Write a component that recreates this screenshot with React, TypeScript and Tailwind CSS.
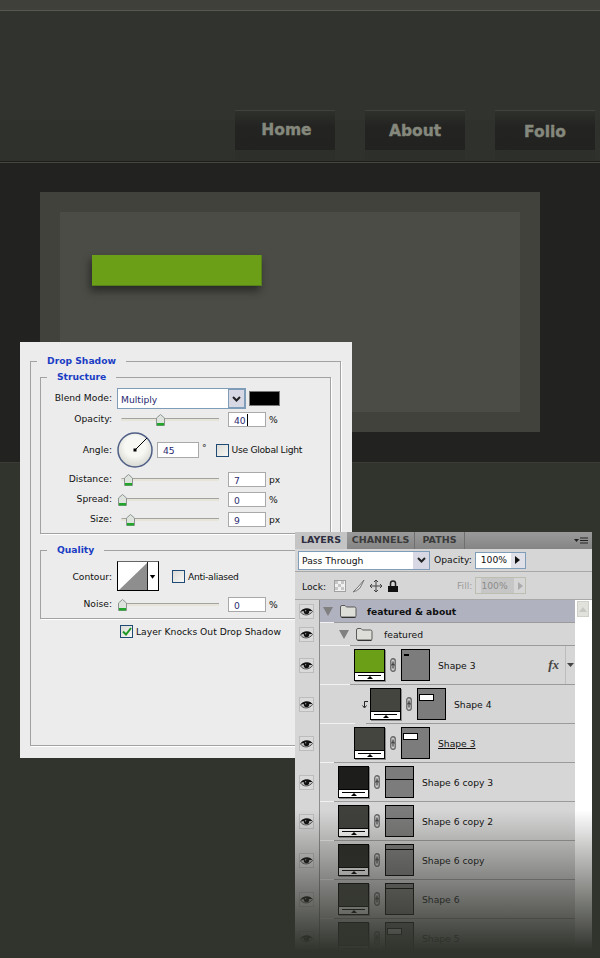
const dialogText = "font-['DejaVu_Sans',sans-serif] text-[9.2px] text-[#111]";

const Thumb = () => (
  <svg width="9" height="12" viewBox="0 0 9 12" className="absolute top-[-5px] -ml-1">
    <path d="M4.5 .5 L8.5 4 V11.5 H.5 V4 Z" fill="#dfe3de" stroke="#8d9490" />
    <rect x="1" y="9" width="7" height="2.5" fill="#22a52b" />
  </svg>
);

const Slider = ({ at }: { at: number }) => (
  <div className="relative ml-[9px] h-[3px] w-[98px] rounded-l-full border-t border-[#a3a3a0] bg-[#e7e5da]">
    <div className="absolute" style={{ left: at }}>
      <Thumb />
    </div>
  </div>
);

const Field = ({ value, caret, className = "ml-[9px] w-[38px]" }: { value: string; caret?: boolean; className?: string }) => (
  <div className={`flex h-[15px] items-center border border-[#a9a9a9] bg-white pl-[5px] text-[#2a2a70] ${className}`}>
    <span className="pt-[2px]">{value}</span>
    {caret && <span className="ml-px h-[12px] w-px bg-black" />}
  </div>
);

const Check = ({ checked }: { checked?: boolean }) => (
  <div className="flex size-[13px] items-center justify-center border border-[#1f4a73] bg-linear-to-br from-[#dcdcd8] to-[#f6f6f4]">
    {checked && (
      <svg width="10" height="9" viewBox="0 0 10 9">
        <path d="M1 4.5 L4 7.5 L9 1" fill="none" stroke="#1d9a24" strokeWidth="2" />
      </svg>
    )}
  </div>
);

const SliderRow = ({ label, at, value, unit, caret, mt }: { label: string; at: number; value: string; unit: string; caret?: boolean; mt: string }) => (
  <div className={`flex h-[15px] items-center ${mt}`}>
    <span className="w-[71px] pb-[2px] text-right">{label}</span>
    <Slider at={at} />
    <Field value={value} caret={caret} />
    <span className="ml-[3px]">{unit}</span>
  </div>
);

const DropShadowDialog = () => (
  <div className={`absolute top-[342px] left-[20px] h-[416px] w-[332px] bg-[#ececec] px-[10px] pt-[12px] ${dialogText}`}>
    <fieldset className="h-[392px] w-[311px] border border-[#a2a2a2] px-[9px] shadow-[1px_1px_0_#fff]">
      <legend className="-ml-[3px] h-[14px] px-[10px] leading-[14px] font-bold text-[#1b3ec4]">Drop Shadow</legend>
      <fieldset className="mt-[2px] w-[291px] border border-[#a2a2a2] px-0 pt-[4px] pb-[6px] shadow-[1px_1px_0_#fff]">
        <legend className="ml-[6px] h-[14px] px-[10px] leading-[14px] font-bold text-[#1b3ec4]">Structure</legend>
        <div className="flex h-[21px] items-center">
          <span className="w-[71px] pb-[2px] text-right">Blend Mode:</span>
          <div className="ml-[5px] flex h-[21px] w-[129px] items-center justify-between border border-[#7f9db9] bg-white pl-[3px] text-[#2a2a70]">
            <span className="pt-[2px]">Multiply</span>
            <div className="flex h-full w-[17px] items-center justify-center border border-[#7f9db9] bg-[#d7d8e4]">
              <svg width="9" height="6" viewBox="0 0 9 6">
                <path d="M1 1 L4.5 4.5 L8 1" fill="none" stroke="#222" strokeWidth="2" />
              </svg>
            </div>
          </div>
          <div className="ml-[3px] h-[15px] w-[31px] border border-[#777] bg-black" />
        </div>
        <SliderRow label="Opacity:" at={39} value="40" unit="%" caret mt="mt-[3px]" />
        <div className="mt-[5px] flex h-[36px] items-center">
          <span className="w-[71px] text-right">Angle:</span>
          <svg width="36" height="36" viewBox="0 0 36 36" className="ml-[5px]">
            <defs>
              <radialGradient id="dial" cx="0.5" cy="0.4" r="0.6">
                <stop offset="0.5" stopColor="#f7f7f3" />
                <stop offset="1" stopColor="#d8d8d2" />
              </radialGradient>
            </defs>
            <circle cx="18" cy="18" r="17" fill="url(#dial)" stroke="#4f5f86" strokeWidth="1.5" />
            <line x1="18" y1="18" x2="30" y2="6" stroke="#000" />
            <rect x="16.5" y="16.5" width="3" height="3" fill="#000" />
          </svg>
          <Field value="45" className="ml-[4px] h-[16px] w-[42px]" />
          <span className="mb-[4px] ml-[3px]">°</span>
          <div className="ml-[9px]"><Check /></div>
          <span className="ml-[3px] tracking-[-0.3px]">Use Global Light</span>
        </div>
        <SliderRow label="Distance:" at={7} value="7" unit="px" mt="mt-[4px]" />
        <SliderRow label="Spread:" at={1} value="0" unit="%" mt="mt-[5px]" />
        <SliderRow label="Size:" at={9} value="9" unit="px" mt="mt-[5px]" />
      </fieldset>
      <fieldset className="mt-[9px] w-[291px] border border-[#a2a2a2] px-0 pt-[4px] pb-[6px] shadow-[1px_1px_0_#fff]">
        <legend className="ml-[6px] h-[14px] px-[10px] leading-[14px] font-bold text-[#1b3ec4]">Quality</legend>
        <div className="flex h-[30px] items-center">
          <span className="w-[71px] pt-[2px] text-right">Contour:</span>
          <div className="ml-[5px] flex h-[30px] w-[42px] border border-black border-t-[#666] bg-white">
            <svg width="29" height="28" viewBox="0 0 29 28">
              <path d="M1 28 L29 1 V28 Z" fill="#8e8e8e" />
            </svg>
            <svg width="11" height="28" viewBox="0 0 11 28" className="border-l border-[#222]">
              <path d="M2 13 H8 L5 17 Z" fill="#000" />
            </svg>
          </div>
          <div className="ml-[13px]"><Check /></div>
          <span className="ml-[3px] pt-[2px] tracking-[-0.3px]">Anti-aliased</span>
        </div>
        <SliderRow label="Noise:" at={1} value="0" unit="%" mt="mt-[6px]" />
      </fieldset>
      <div className="mt-[6px] ml-[80px] flex items-center">
        <Check checked />
        <span className="ml-[3px]">Layer Knocks Out Drop Shadow</span>
      </div>
    </fieldset>
  </div>
);

const Eye = () => (
  <div className="flex size-[15px] items-center justify-center border border-[#bcbcbc] bg-[#dadada]">
    <svg width="13" height="10" viewBox="0 0 13 10">
      <path d="M.5 5 C3 1 9.5 .4 12.5 4.5 C9.5 9 3 9 .5 5 Z" fill="#c4c4c4" stroke="#555" />
      <path d="M.5 4.5 C3 .8 9.5 .4 12.5 4 L9 4 L4 4 Z" fill="#111" />
      <circle cx="6.5" cy="4.6" r="2.7" fill="#111" />
      <circle cx="5.6" cy="3.8" r=".7" fill="#999" />
    </svg>
  </div>
);

const Folder = () => (
  <svg width="17" height="13" viewBox="0 0 17 13" className="shrink-0">
    <path d="M.5 11 V2 Q.5 .5 2 .5 H5 L6.5 2 H14.5 Q16 2 16 3.5 V11 Q16 12 14.5 12 H2 Q.5 12 .5 11 Z" fill="#deded8" stroke="#5a5a5a" />
    <path d="M1.5 12.5 H15.5" stroke="#333" />
  </svg>
);

const Triangle = () => (
  <svg width="10" height="9" viewBox="0 0 10 9" className="shrink-0">
    <path d="M0 0 H10 L5 9 Z" fill="#808080" />
  </svg>
);

const Chain = () => (
  <svg width="6" height="14" viewBox="0 0 6 14" className="shrink-0">
    <rect x=".75" y=".75" width="4.5" height="7" rx="2.2" fill="#cfcfcf" stroke="#666" strokeWidth="1.3" />
    <rect x=".75" y="6.25" width="4.5" height="7" rx="2.2" fill="#cfcfcf" stroke="#666" strokeWidth="1.3" />
    <line x1="3" y1="3.5" x2="3" y2="10.5" stroke="#222" />
  </svg>
);

const MaskShape = ({ kind }: { kind: string }) => (
  <div className="relative h-[32px] w-[29px] shrink-0 border border-black bg-[#7c7c7c]">
    {kind === "dash" && <div className="absolute top-[4px] left-[2px] h-px w-[5px] border-t-2 border-black" />}
    {kind === "box" && <div className="absolute top-[5px] left-[1px] h-[7px] w-[15px] border border-black bg-white" />}
    {kind === "line" && <div className="absolute top-[12px] left-0 h-px w-full bg-black" />}
    {kind === "lineTop" && <div className="absolute top-[4px] left-0 h-px w-full bg-black" />}
  </div>
);

const ColorThumb = ({ color }: { color: string }) => (
  <div className="flex h-[32px] w-[31px] shrink-0 flex-col border border-black bg-white shadow-[1px_1px_0_#8a8a8a]">
    <div className="h-[22px]" style={{ background: color }} />
    <div className="flex flex-1 flex-col items-center border-t border-black pt-[2px]">
      <div className="h-px w-[23px] bg-black" />
      <svg width="6" height="3" viewBox="0 0 6 3"><path d="M0 3 H6 L3 0 Z" fill="#000" /></svg>
    </div>
  </div>
);

// white part of the row rule, then the grey part starting further right
const Divider = ({ white, gap = "" }: { white: string; gap?: string }) => (
  <div className="flex h-px shrink-0">
    <div className={`bg-[#f2f2f2] ${white}`} />
    <div className={gap} />
    <div className="flex-1 bg-[#9b9b9b]" />
  </div>
);

const EyeCol = () => (
  <div className="flex w-[25px] shrink-0 items-center justify-center border-r border-[#8c8c8c] pr-px">
    <Eye />
  </div>
);

type Layer = { name: string; color: string; mask: string; pad: string; rule: string; gap?: string; under?: boolean; fx?: boolean; clip?: boolean };

const layers: Layer[] = [
  { name: "Shape 3", color: "#6a9f17", mask: "dash", pad: "pl-[34px]", rule: "w-[30px]", fx: true },
  { name: "Shape 4", color: "#44453f", mask: "box", pad: "pl-[50px]", rule: "w-[35px]", gap: "w-[11px]", clip: true },
  { name: "Shape 3", color: "#44453f", mask: "box", pad: "pl-[34px]", rule: "w-[14px]", under: true },
  { name: "Shape 6 copy 3", color: "#1d1e1b", mask: "line", pad: "pl-[18px]", rule: "w-[14px]" },
  { name: "Shape 6 copy 2", color: "#3f403b", mask: "line", pad: "pl-[18px]", rule: "w-[14px]" },
  { name: "Shape 6 copy", color: "#272824", mask: "lineTop", pad: "pl-[18px]", rule: "w-[14px]" },
  { name: "Shape 6", color: "#3f403b", mask: "lineTop", pad: "pl-[18px]", rule: "w-[14px]" },
  { name: "Shape 5", color: "#3f403b", mask: "box", pad: "pl-[18px]", rule: "w-[14px]" },
];

const LayerRow = ({ layer }: { layer: Layer }) => (
  <div className="flex h-[39px]">
    <EyeCol />
    <div className="flex min-w-0 flex-1 flex-col">
      <div className="flex min-h-0 flex-1 items-center">
        <div className={`flex min-w-0 flex-1 items-center ${layer.pad}`}>
          {layer.clip && (
            <svg width="8" height="9" viewBox="0 0 8 9" className="mr-[1px] -ml-[9px] shrink-0">
              <path d="M7 1.5 H3.5 V7 M1.5 5.5 L3.5 8 L5.5 5.5" fill="none" stroke="#222" />
            </svg>
          )}
          <ColorThumb color={layer.color} />
          <div className="mx-[5px] shrink-0"><Chain /></div>
          <MaskShape kind={layer.mask} />
          <span className={`ml-[8px] pt-[2px] ${layer.under ? "underline" : ""}`}>{layer.name}</span>
        </div>
        {layer.fx && (
          <div className="flex h-full items-center">
            <span className="mr-[6px] font-['Liberation_Serif',serif] text-[13px] font-bold italic text-[#444]">fx</span>
            <div className="flex h-full w-[10px] items-center justify-center border-l border-[#bdbdbd]">
              <svg width="7" height="4" viewBox="0 0 7 4"><path d="M0 0 H7 L3.5 4 Z" fill="#444" /></svg>
            </div>
          </div>
        )}
      </div>
      <Divider white={layer.rule} gap={layer.gap} />
    </div>
  </div>
);

const LayersPanel = () => (
  <div className="absolute top-[532px] left-[295px] flex h-[426px] w-[297px] flex-col overflow-hidden bg-[#d6d6d6] font-['DejaVu_Sans',sans-serif] text-[9.2px] text-[#111]">
    <div className="flex h-[17px] shrink-0 items-stretch bg-linear-to-b from-[#9a9a9a] to-[#858585] text-[9.5px] font-bold text-[#3a3a3a]">
      <div className="flex w-[52px] items-center justify-center bg-[#c4c4c4] text-[#2e2e40]">LAYERS</div>
      <div className="flex w-[68px] items-center justify-center border-r border-[#6f6f6f]">CHANNELS</div>
      <div className="flex w-[50px] items-center justify-center border-r border-[#6f6f6f]">PATHS</div>
      <div className="ml-auto flex items-center pr-[3px]">
        <svg width="15" height="7" viewBox="0 0 15 7">
          <path d="M0 2 H5 L2.5 5 Z" fill="#222" />
          <path d="M6 1 H14 M6 3.5 H14 M6 6 H14" stroke="#222" />
        </svg>
      </div>
    </div>
    <div className="flex h-[22px] shrink-0 items-center pl-[3px]">
      <div className="flex h-[19px] w-[132px] items-center justify-between border border-[#7f9db9] bg-white pl-[3px]">
        <span className="pt-px">Pass Through</span>
        <div className="flex h-full w-[16px] items-center justify-center bg-[#d7d8e4]">
          <svg width="9" height="6" viewBox="0 0 9 6"><path d="M1 1 L4.5 4.5 L8 1" fill="none" stroke="#222" strokeWidth="2" /></svg>
        </div>
      </div>
      <span className="ml-[4px]">Opacity:</span>
      <div className="ml-[3px] flex h-[17px] w-[51px] items-center border border-[#7f9db9] bg-white pl-[5px]">
        100%
        <div className="ml-auto flex h-full w-[14px] items-center justify-center bg-[#e0e0e8]">
          <svg width="5" height="8" viewBox="0 0 5 8"><path d="M0 0 L5 4 L0 8 Z" fill="#111" /></svg>
        </div>
      </div>
    </div>
    <div className="flex h-[29px] shrink-0 items-center border-y border-[#a8a8a8] pl-[7px]">
      <span className="w-[26px] pt-[2px]">Lock:</span>
      <svg width="12" height="12" viewBox="0 0 12 12" className="ml-[6px]">
        <rect x=".5" y=".5" width="11" height="11" fill="#f0f0f0" stroke="#a0a0a0" />
        <path d="M1 1 H4 V4 H1 Z M7 1 H10 V4 H7 Z M4 4 H7 V7 H4 Z M1 7 H4 V10 H1 Z M7 7 H10 V10 H7 Z" fill="#c6c6c6" />
      </svg>
      <svg width="13" height="14" viewBox="0 0 13 14" className="ml-[6px]">
        <path d="M12 1 L6 8 L1 13 Q5 12 8 9 Z" fill="#e8e8e8" stroke="#777" />
      </svg>
      <svg width="12" height="12" viewBox="0 0 12 12" className="ml-[5px]">
        <path d="M6 0 V12 M0 6 H12 M4 2 L6 0 L8 2 M4 10 L6 12 L8 10 M2 4 L0 6 L2 8 M10 4 L12 6 L10 8" fill="none" stroke="#444" />
      </svg>
      <svg width="10" height="12" viewBox="0 0 10 12" className="ml-[6px]">
        <path d="M2.5 6 V3.5 Q2.5 1 5 1 Q7.5 1 7.5 3.5 V6" fill="none" stroke="#222" strokeWidth="1.5" />
        <rect x="0" y="6" width="10" height="6" fill="#111" />
      </svg>
      <span className="ml-[59px] pt-[1px] text-[#9c9c9c]">Fill:</span>
      <div className="ml-[3px] flex h-[17px] w-[51px] items-center border border-[#bdbdb0] pl-[5px] text-[#8c8c8c]">
        <span className="flex h-full w-[33px] items-center bg-[#c6c6c6]">100%</span>
        <svg width="5" height="8" viewBox="0 0 5 8" className="ml-[4px]"><path d="M0 0 L5 4 L0 8 Z" fill="#aaa" /></svg>
      </div>
    </div>
    <div className="flex min-h-0 flex-1">
      <div className="w-[280px] shrink-0">
        <div className="flex h-[23px]">
          <EyeCol />
          <div className="flex flex-1 flex-col">
            <div className="flex min-h-0 flex-1 items-center bg-[#b0b2c0] pl-[3px]">
              <Triangle />
              <div className="ml-[7px]"><Folder /></div>
              <span className="ml-[10px] pt-[2px] font-bold">featured &amp; about</span>
            </div>
            <Divider white="w-[14px]" />
          </div>
        </div>
        <div className="flex h-[23px]">
          <EyeCol />
          <div className="flex flex-1 flex-col">
            <div className="flex min-h-0 flex-1 items-center pl-[19px]">
              <Triangle />
              <div className="ml-[7px]"><Folder /></div>
              <span className="ml-[11px] pt-[2px]">featured</span>
            </div>
            <Divider white="w-[30px]" />
          </div>
        </div>
        {layers.map((layer, i) => (
          <LayerRow key={i} layer={layer} />
        ))}
      </div>
      <div className="flex-1 bg-white pt-px pl-[2px]">
        <div className="flex h-[16px] w-[12px] items-center justify-center border border-[#d0d0c8] bg-[#e2e2dc]">
          <svg width="8" height="5" viewBox="0 0 8 5"><path d="M0 5 L4 0 L8 5 Z" fill="#c8c8c2" /></svg>
        </div>
      </div>
    </div>
  </div>
);

const NavButton = ({ label, className }: { label: string; className: string }) => (
  <div className="-mt-[10px]">
    <div className={`flex h-[40px] w-[100px] items-center justify-center border-t border-[#41423d] bg-linear-to-b from-[#2e302b] via-[#232422] via-40% to-[#222320] font-['DejaVu_Sans',sans-serif] text-[15.5px] font-bold text-[#85887c] [-webkit-text-stroke:0.4px_#85887c] ${className}`}>
      {label}
    </div>
    <div className="h-[10px] w-[100px] bg-[#2d2f2b]" />
  </div>
);

export default function App() {
  return (
    <div className="relative h-[958px] w-[600px] overflow-hidden bg-[#31332d]">
      <div className="h-[11px] border-b border-[#56574f] bg-[#3f403a]" />
      <div className="h-[109px] bg-[#31332e]" />
      <div className="flex h-[41px] justify-end gap-[30px] bg-[#2f312c] pr-[5px]">
        <NavButton label="Home" className="pl-[3px]" />
        <NavButton label="About" className="pt-[2px]" />
        <NavButton label="Folio" className="pt-[4px]" />
      </div>
      <div className="h-[2px] border-t border-[#1c1d1a] bg-[#45463f]" />
      <div className="h-[299px] bg-[#222320] pt-[29px] pl-[40px]">
        <div className="h-[240px] w-[500px] bg-[#41423c] p-[20px]">
          <div className="h-[200px] w-[460px] bg-[#4b4c46] pt-[43px] pl-[32px]">
            <div className="h-[31px] w-[170px] border-r border-b border-[#55801a] bg-[#6a9f17] shadow-[-2px_5px_8px_rgba(0,0,0,0.45)]" />
          </div>
        </div>
      </div>
      <div className="h-px bg-[#3a3b36]" />
      <DropShadowDialog />
      <LayersPanel />
      <div className="absolute top-[810px] right-0 bottom-0 left-[290px] bg-linear-to-b from-[#31332d00] to-[#31332d] to-95%" />
    </div>
  );
}
